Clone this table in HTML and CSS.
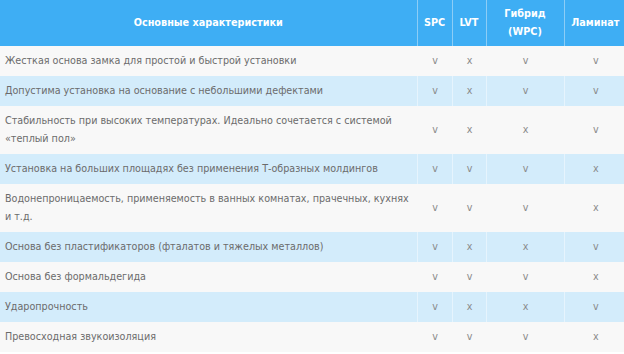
FILE: index.html
```html
<!DOCTYPE html>
<html lang="ru">
<head>
<meta charset="utf-8">
<link rel="stylesheet" href="styles.css">
</head>
<body>
<table class="specs">
  <colgroup>
    <col class="c-main"><col class="c-spc"><col class="c-lvt"><col class="c-wpc"><col class="c-lam">
  </colgroup>
  <thead>
    <tr>
      <th>Основные характеристики</th>
      <th>SPC</th>
      <th>LVT</th>
      <th>Гибрид<br>(WPC)</th>
      <th>Ламинат</th>
    </tr>
  </thead>
  <tbody>
    <tr><td>Жесткая основа замка для простой и быстрой установки</td><td>v</td><td>x</td><td>v</td><td>v</td></tr>
    <tr><td>Допустима установка на основание с небольшими дефектами</td><td>v</td><td>x</td><td>v</td><td>v</td></tr>
    <tr><td>Стабильность при высоких температурах. Идеально сочетается с системой «теплый пол»</td><td>v</td><td>x</td><td>x</td><td>v</td></tr>
    <tr><td>Установка на больших площадях без применения Т-образных молдингов</td><td>v</td><td>v</td><td>v</td><td>x</td></tr>
    <tr><td>Водонепроницаемость, применяемость в ванных комнатах, прачечных, кухнях и т.д.</td><td>v</td><td>v</td><td>v</td><td>x</td></tr>
    <tr><td>Основа без пластификаторов (фталатов и тяжелых металлов)</td><td>v</td><td>x</td><td>x</td><td>v</td></tr>
    <tr><td>Основа без формальдегида</td><td>v</td><td>v</td><td>v</td><td>x</td></tr>
    <tr><td>Ударопрочность</td><td>v</td><td>x</td><td>x</td><td>v</td></tr>
    <tr><td>Превосходная звукоизоляция</td><td>v</td><td>v</td><td>v</td><td>x</td></tr>
  </tbody>
</table>
</body>
</html>
```
FILE: styles.css
```css
html, body {
  margin: 0;
  padding: 0;
  background: #ffffff;
}
body {
  font-family: "DejaVu Sans", Verdana, sans-serif;
  font-size: 9.6px;
  color: #6b6b6b;
}
.specs {
  border-collapse: collapse;
  table-layout: fixed;
  width: 626px;
}
.c-main { width: 417px; }
.c-spc { width: 35px; }
.c-lvt { width: 34px; }
.c-wpc { width: 78px; }
.c-lam { width: 62px; }
.specs th {
  background: #3eaef4;
  color: #ffffff;
  font-weight: bold;
  font-size: 9.7px;
  line-height: 18px;
  height: 46px;
  padding: 0 2px;
  text-align: center;
  border-left: 1px solid #8ccdf6;
  box-sizing: border-box;
}
.specs th:first-child { border-left: none; }
.specs td {
  line-height: 18px;
  padding: 6px 4px 6px 5px;
  text-align: center;
  vertical-align: middle;
  color: #8a8a8a;
  border-left: 1px solid #e9f3fa;
}
.specs td:first-child {
  text-align: left;
  color: #6b6b6b;
  border-left: none;
}
.specs tbody tr:nth-child(odd) td { background: #f8f8f8; border-left-color: #f8f8f8; }
.specs tbody tr:nth-child(even) td { background: #d3ecfb; border-left-color: #e6f4fd; }
.specs tbody tr:nth-child(odd) td:first-child,
.specs tbody tr:nth-child(even) td:first-child { border-left: none; }
```
